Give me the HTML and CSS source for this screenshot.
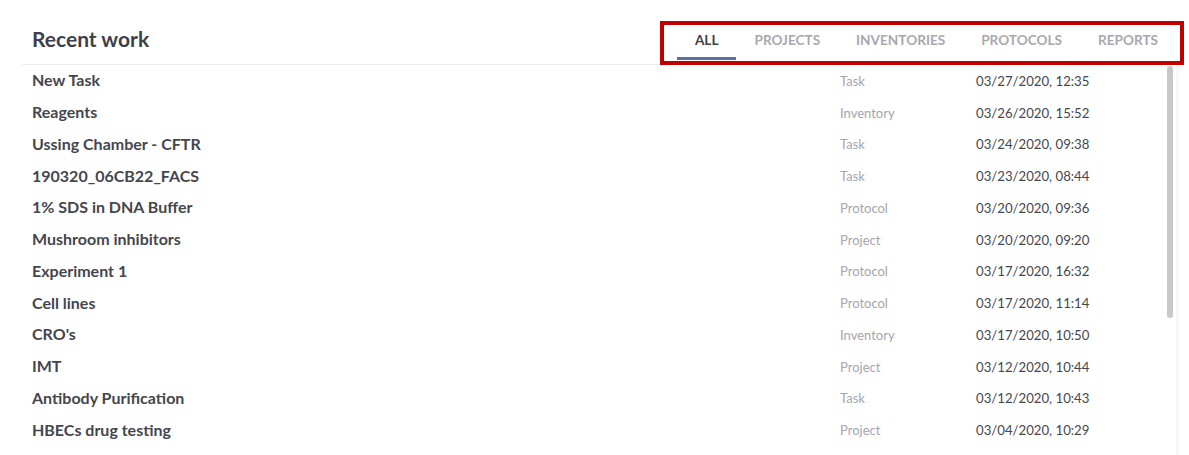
FILE: index.html
```html
<!DOCTYPE html>
<html>
<head>
<meta charset="utf-8">
<link rel="stylesheet" href="styles.css">
</head>
<body>
<div class="card">
  <header class="head">
    <h1 class="title">Recent work</h1>
    <nav class="tabs">
      <span class="tab active">ALL</span>
      <span class="tab">PROJECTS</span>
      <span class="tab">INVENTORIES</span>
      <span class="tab">PROTOCOLS</span>
      <span class="tab">REPORTS</span>
    </nav>
    <div class="highlight"></div>
  </header>
  <div class="body">
    <div class="list">
      <div class="row"><span class="name">New Task</span><span class="type">Task</span><span class="date">03/27/2020, 12:35</span></div>
      <div class="row"><span class="name">Reagents</span><span class="type">Inventory</span><span class="date">03/26/2020, 15:52</span></div>
      <div class="row"><span class="name">Ussing Chamber - CFTR</span><span class="type">Task</span><span class="date">03/24/2020, 09:38</span></div>
      <div class="row"><span class="name">190320_06CB22_FACS</span><span class="type">Task</span><span class="date">03/23/2020, 08:44</span></div>
      <div class="row"><span class="name">1% SDS in DNA Buffer</span><span class="type">Protocol</span><span class="date">03/20/2020, 09:36</span></div>
      <div class="row"><span class="name">Mushroom inhibitors</span><span class="type">Project</span><span class="date">03/20/2020, 09:20</span></div>
      <div class="row"><span class="name">Experiment 1</span><span class="type">Protocol</span><span class="date">03/17/2020, 16:32</span></div>
      <div class="row"><span class="name">Cell lines</span><span class="type">Protocol</span><span class="date">03/17/2020, 11:14</span></div>
      <div class="row"><span class="name">CRO's</span><span class="type">Inventory</span><span class="date">03/17/2020, 10:50</span></div>
      <div class="row"><span class="name">IMT</span><span class="type">Project</span><span class="date">03/12/2020, 10:44</span></div>
      <div class="row"><span class="name">Antibody Purification</span><span class="type">Task</span><span class="date">03/12/2020, 10:43</span></div>
      <div class="row"><span class="name">HBECs drug testing</span><span class="type">Project</span><span class="date">03/04/2020, 10:29</span></div>
    </div>
    <div class="track"><div class="thumb"></div></div>
    <div class="edge"></div>
  </div>
</div>
</body>
</html>
```

FILE: styles.css
```css
* { box-sizing: border-box; }
html, body { margin: 0; padding: 0; background: #fff; }
body {
  font-family: Lato, "Open Sans", sans-serif;
  width: 1189px;
  height: 455px;
  overflow: hidden;
}
.card {
  margin-left: 22px;
  width: 1158px;
}
.head {
  position: relative;
  display: flex;
  justify-content: space-between;
  height: 65px;
  width: 1154px;
  border-bottom: 1px solid #ececf0;
}
.title {
  margin: 0;
  padding: 26px 0 0 10px;
  font-size: 21px;
  font-weight: 700;
  color: #3f4047;
  line-height: 26px;
}
.tabs {
  display: flex;
  align-items: flex-start;
}
.tab {
  display: block;
  height: 60px;
  padding: 32px 18px 0;
  line-height: 16px;
  font-size: 13.6px;
  font-weight: 700;
  color: #a8a8b0;
  border-bottom: 3px solid transparent;
}
.tab.active {
  color: #3e3f46;
  border-bottom-color: #5b6f9c;
}
.highlight {
  position: absolute;
  left: 638px;
  top: 21px;
  width: 524px;
  height: 44px;
  border: 4px solid #c00000;
  pointer-events: none;
}
.body {
  display: flex;
  height: 390px;
}
.list {
  flex: 1;
}
.row {
  display: grid;
  grid-template-columns: 808px 136px 1fr;
  align-items: center;
  height: 31.75px;
  padding-left: 10px;
}
.name {
  font-size: 16px;
  line-height: 18px;
  margin-bottom: 1px;
  font-weight: 700;
  color: #45464d;
}
.type {
  font-size: 13px;
  color: #a5a5ad;
}
.date {
  font-size: 13.2px;
  color: #45464d;
}
.track {
  width: 14px;
  padding: 1px 3px 0 5px;
}
.thumb {
  width: 6px;
  height: 252px;
  border-radius: 3px;
  background: #c7c7cc;
}
.edge {
  width: 4px;
  background: linear-gradient(to right, #f6f6f6, #fbfbfb);
}
```
